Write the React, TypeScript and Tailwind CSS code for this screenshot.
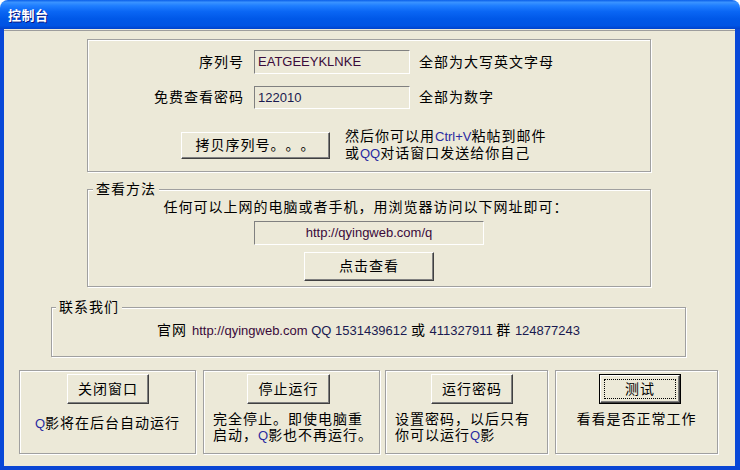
import React from "react";

const etched =
  "border border-[#A0A0A0] shadow-[1px_1px_0_#ffffff,inset_1px_1px_0_#ffffff]";
const raised =
  "border border-t-white border-l-white border-r-[#404040] border-b-[#404040] shadow-[inset_-1px_-1px_0_#808080] bg-[#ECE9D8]";
const sunken =
  "border border-t-[#808080] border-l-[#808080] border-r-white border-b-white bg-[#ECE9D8]";

function L({ children, c }: { children: React.ReactNode; c?: string }) {
  return (
    <span
      className={`font-['Liberation_Sans',Arial,sans-serif] text-[13px] tracking-normal ${
        c ?? "text-[#3a0a3a]"
      }`}
    >
      {children}
    </span>
  );
}

export default function App() {
  return (
    <div className="w-[740px] h-[470px] bg-white overflow-hidden font-['Liberation_Sans','Noto_Sans_CJK_SC',sans-serif] text-[14px] tracking-[1px] text-black [text-spacing-trim:space-all]">
      <div className="w-full h-full flex flex-col">
        {/* Title bar */}
        <div className="h-[29px] rounded-t-[8px] bg-[linear-gradient(180deg,#0a5ee9_0%,#3a93ff_8%,#1f7eff_20%,#0a66f4_40%,#0058e8_65%,#0054e4_88%,#0042cc_100%)] flex items-center pl-[8px]">
          <span className="font-['Noto_Sans_CJK_SC',sans-serif] font-bold text-[13px] tracking-[0.5px] text-white [text-shadow:1px_1px_0_#0a1883] leading-none">
            控制台
          </span>
        </div>
        {/* Frame */}
        <div className="flex-1 border-l-[4px] border-r-[5px] border-b-[4px] border-l-[#0848d8] border-r-[#0848d8] border-b-[#0a46d4] bg-[#ECE9D8] pt-[1px] flex flex-col">
          <div className="flex-1 border-t border-t-[#9D9D9D] flex flex-col">
            {/* Group 1 */}
            <div className={`ml-[83px] mt-[8px] w-[564px] ${etched} pt-[10px] pb-[9px]`}>
              <div className="flex items-center h-[24px]">
                <div className="w-[156px] text-right leading-[17px]">序列号</div>
                <div className={`ml-[10px] w-[156px] h-[24px] ${sunken} flex items-center pl-[3px]`}>
                  <L>EATGEEYKLNKE</L>
                </div>
                <div className="ml-[9px] leading-[17px]">全部为大写英文字母</div>
              </div>
              <div className="flex items-center h-[23px] mt-[12px]">
                <div className="w-[156px] text-right leading-[17px]">免费查看密码</div>
                <div className={`ml-[10px] w-[156px] h-[23px] ${sunken} flex items-center pl-[3px]`}>
                  <L c="text-[#1a1a50]">122010</L>
                </div>
                <div className="ml-[9px] leading-[17px]">全部为数字</div>
              </div>
              <div className="flex items-center mt-[19px] h-[34px]">
                <div className={`ml-[93px] w-[149px] h-[27px] ${raised} flex items-center justify-center leading-[17px]`}>
                  拷贝序列号。。。
                </div>
                <div className="ml-[15px] leading-[16px]">
                  <div>
                    然后你可以用<L c="text-[#2a2aa0]">Ctrl+V</L>粘帖到邮件
                  </div>
                  <div>
                    或<L c="text-[#2a2aa0]">QQ</L>对话窗口发送给你自己
                  </div>
                </div>
              </div>
            </div>

            {/* Group 2 */}
            <fieldset className={`ml-[83px] mt-[9px] w-[564px] ${etched} pb-[5px]`}>
              <legend className="ml-[5px] px-[3px] bg-[#ECE9D8] leading-[17px]">查看方法</legend>
              <div className="flex flex-col items-center">
                <div className="leading-[17px] mt-[1px] mr-[6px]">
                  任何可以上网的电脑或者手机，用浏览器访问以下网址即可：
                </div>
                <div className={`mt-[5px] w-[230px] h-[24px] ${sunken} flex items-center justify-center`}>
                  <L>http://qyingweb.com/q</L>
                </div>
                <div className={`mt-[7px] w-[130px] h-[29px] ${raised} flex items-center justify-center leading-[17px]`}>
                  点击查看
                </div>
              </div>
            </fieldset>

            {/* Group 3 */}
            <fieldset className={`ml-[47px] mt-[12px] w-[635px] ${etched} pb-[17px]`}>
              <legend className="ml-[4px] px-[3px] bg-[#ECE9D8] leading-[17px]">联系我们</legend>
              <div className="flex justify-center mt-[6px] leading-[17px]">
                <div>
                  官网 <L>http://qyingweb.com</L>
                  <L c="text-[#1a1a50]"> QQ 1531439612 </L>或
                  <L c="text-[#1a1a50]"> 411327911 </L>群
                  <L c="text-[#1a1a50]"> 124877243</L>
                </div>
              </div>
            </fieldset>

            {/* Bottom panels */}
            <div className="flex mt-[13px] ml-[15px]">
              <div className={`w-[177px] h-[84px] ${etched} pt-[3px]`}>
                <div className={`ml-[47px] w-[82px] h-[30px] ${raised} flex items-center justify-center leading-[17px]`}>
                  关闭窗口
                </div>
                <div className="mt-[11px] text-center leading-[16px]">
                  <L c="text-[#2a2aa0]">Q</L>影将在后台自动运行
                </div>
              </div>
              <div className={`ml-[7px] w-[177px] h-[84px] ${etched} pt-[3px]`}>
                <div className={`ml-[43px] w-[83px] h-[30px] ${raised} flex items-center justify-center leading-[17px]`}>
                  停止运行
                </div>
                <div className="mt-[7px] pl-[9px] leading-[16px]">
                  <div>完全停止。即使电脑重</div>
                  <div>
                    启动，<L c="text-[#2a2aa0]">Q</L>影也不再运行。
                  </div>
                </div>
              </div>
              <div className={`ml-[5px] w-[163px] h-[84px] ${etched} pt-[3px]`}>
                <div className={`ml-[45px] w-[82px] h-[30px] ${raised} flex items-center justify-center leading-[17px]`}>
                  运行密码
                </div>
                <div className="mt-[7px] pl-[9px] leading-[16px]">
                  <div>设置密码，以后只有</div>
                  <div>
                    你可以运行<L c="text-[#2a2aa0]">Q</L>影
                  </div>
                </div>
              </div>
              <div className={`ml-[7px] w-[163px] h-[84px] ${etched} pt-[3px]`}>
                <div className="ml-[43px] w-[82px] h-[30px] border border-black">
                  <div className={`w-full h-full ${raised} p-[3px]`}>
                    <div className="w-full h-full border border-dotted border-black flex items-center justify-center leading-[17px]">
                      测试
                    </div>
                  </div>
                </div>
                <div className="mt-[7px] text-center leading-[16px]">看看是否正常工作</div>
              </div>
            </div>
          </div>
        </div>
      </div>
    </div>
  );
}
